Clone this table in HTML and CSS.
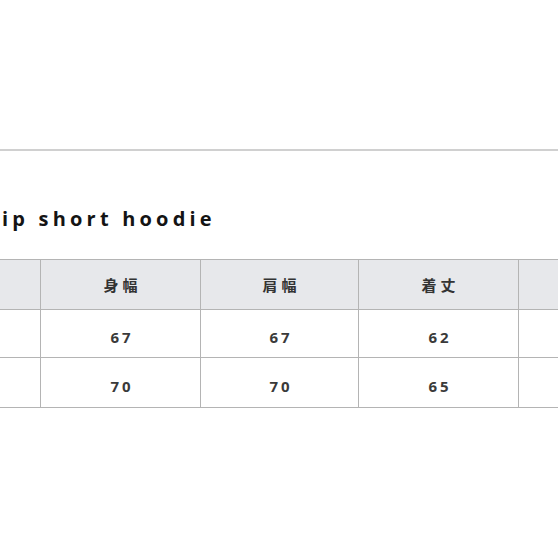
FILE: index.html
```html
<!DOCTYPE html>
<html lang="ja">
<head>
<meta charset="utf-8">
<title>zip short hoodie</title>
<link rel="stylesheet" href="styles.css">
</head>
<body>
<div class="page">
  <div class="rule"></div>
  <h1 class="title">ip short hoodie</h1>
  <table class="size-table">
    <colgroup>
      <col class="c-label">
      <col class="c-std">
      <col class="c-mid">
      <col class="c-std">
      <col class="c-std">
    </colgroup>
    <tr class="head">
      <th></th>
      <th>身幅</th>
      <th>肩幅</th>
      <th>着丈</th>
      <th></th>
    </tr>
    <tr class="row-a">
      <td></td>
      <td>67</td>
      <td>67</td>
      <td>62</td>
      <td></td>
    </tr>
    <tr class="row-b">
      <td></td>
      <td>70</td>
      <td>70</td>
      <td>65</td>
      <td></td>
    </tr>
  </table>
</div>
</body>
</html>
```

FILE: styles.css
```css
html, body {
  margin: 0;
  padding: 0;
  background: #ffffff;
}

.page {
  width: 558px;
  height: 558px;
  overflow: hidden;
  padding-top: 149px;
  box-sizing: border-box;
}

.rule {
  height: 2px;
  background: #d0d0d0;
}

.title {
  margin: 56px 0 0 2px;
  font-family: "Open Sans", "Noto Sans", sans-serif;
  font-weight: 700;
  font-size: 20px;
  line-height: 24px;
  letter-spacing: 4.2px;
  color: #141414;
}

.size-table {
  margin-top: 28px;
  margin-left: -120px;
  border-collapse: collapse;
  table-layout: fixed;
  width: 798px;
}

.c-label, .c-std { width: 160px; }
.c-mid { width: 158px; }

.size-table th,
.size-table td {
  border: 1px solid #b4b4b4;
  text-align: center;
  padding: 0;
  color: #3a3a3a;
  font-family: "Open Sans", "Noto Sans CJK JP", sans-serif;
  font-weight: 700;
}

.size-table th {
  background: #e7e8eb;
  font-family: "Noto Sans CJK JP", sans-serif;
  font-size: 15px;
  letter-spacing: 4px;
  text-indent: 4px;
  color: #333333;
}

.size-table td {
  font-size: 15px;
  letter-spacing: 3px;
  text-indent: 3px;
  padding-top: 6px;
}

.head { height: 50px; }
.row-a { height: 48px; }
.row-b { height: 50px; }
```
